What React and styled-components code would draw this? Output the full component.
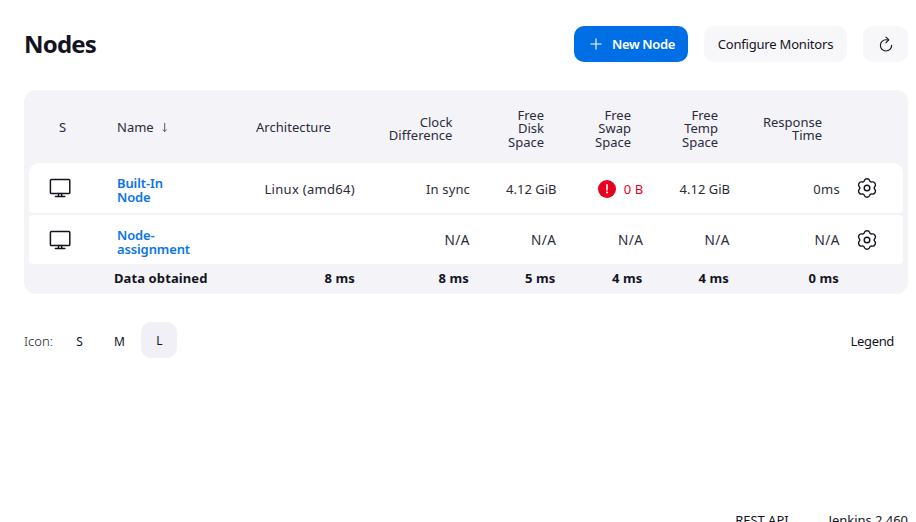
import React from "react";
import styled, { createGlobalStyle } from "styled-components";
import { IoRefreshOutline } from "react-icons/io5";

const GlobalStyle = createGlobalStyle`
  *, *::before, *::after { box-sizing: border-box; }
  html, body { margin: 0; height: 100%; overflow: hidden; background: #fff; }
  body { font: 400 13px/18px "Noto Sans", sans-serif; color: #14141f; }
  svg { display: block; flex: none; }
`;

const Page = styled.main`
  height: 522px;
  padding: 26px 8px 0 24px;
  display: flex;
  flex-direction: column;
  overflow: hidden;
`;

const AppBar = styled.header`
  display: flex;
  align-items: center;
  gap: 16px;
  height: 36px;
  margin-bottom: 28px;
`;

const Title = styled.h1`
  flex: 1;
  margin: 0;
  font-size: 24px;
  line-height: 36px;
  font-weight: 700;
  letter-spacing: -0.8px;
`;

const Button = styled.button`
  display: flex;
  align-items: center;
  justify-content: center;
  width: ${(p) => p.$width}px;
  height: 36px;
  padding: ${(p) => (p.$primary ? "0 0 0 3px" : "0")};
  border: 0;
  border-radius: 10px;
  font: ${(p) => (p.$primary ? 600 : 400)} 13px/18px "Noto Sans", sans-serif;
  letter-spacing: ${(p) => (p.$primary ? -0.35 : -0.2)}px;
  white-space: nowrap;
  color: ${(p) => (p.$primary ? "#fff" : "#14141f")};
  background: ${(p) => (p.$primary ? "#006fe6" : "#f7f7fa")};
  gap: 10px;
`;

const Table = styled.section`
  display: flex;
  flex-direction: column;
  height: 204px;
  padding: 0 5px;
  border-radius: 12px;
  background: #f3f3f8;
`;

const Row = styled.div`
  display: grid;
  grid-template-columns: 88px 90px 148px 115px 86.5px 87px 86.5px 110px 63px;
  align-items: center;
`;

const HeadRow = styled(Row)`
  height: 73px;
  padding-top: 2px;
  line-height: 13.5px;
  color: #2b2b38;
`;

const NodeRow = styled(Row)`
  height: ${(p) => p.$height}px;
  margin-bottom: ${(p) => (p.$first ? 2 : 0)}px;
  border-radius: ${(p) => (p.$first ? "10px 10px 4px 4px" : "4px")};
  background: #fff;
  color: #2b2b38;
`;

const FootRow = styled(Row)`
  height: 27px;
  font-weight: 700;
  letter-spacing: 0.1px;
`;

const Cell = styled.div`
  display: flex;
  align-items: center;
  justify-content: flex-end;
  text-align: right;
  white-space: pre-line;
  gap: 8px;
  padding-right: ${(p) => p.$inset || 0}px;
  padding-top: ${(p) => p.$drop || 0}px;
  font-size: ${(p) => p.$size || 13}px;
  letter-spacing: ${(p) => p.$tracking || 0}px;
  color: ${(p) => (p.$alert ? "#e6001f" : "inherit")};
`;

const StatusCell = styled.div`
  padding-left: ${(p) => p.$start}px;
`;

const NameCell = styled.div`
  display: flex;
  align-items: center;
  gap: 8px;
  white-space: nowrap;
`;

const NodeLink = styled.a`
  white-space: pre-line;
  font-weight: 600;
  letter-spacing: -0.12px;
  line-height: 14px;
  padding-top: ${(p) => p.$drop}px;
  color: #0b74ea;
`;

const FootLabel = styled.div`
  margin-left: -3px;
  white-space: nowrap;
`;

const GearCell = styled.div`
  padding-left: 16px;
  padding-bottom: ${(p) => p.$lift}px;
`;

const IconBar = styled.div`
  display: flex;
  align-items: center;
  height: 36px;
  margin-top: 28px;
`;

const IconLabel = styled.span`
  width: 37px;
  padding-top: 2px;
  font-weight: 300;
`;

const SizeOption = styled.button`
  width: 36px;
  height: 36px;
  margin-right: 4px;
  padding: ${(p) => (p.$active ? 1 : 3)}px 0 0 1px;
  border: 0;
  border-radius: 10px;
  font: 400 12px/18px "Noto Sans", sans-serif;
  color: #14141f;
  background: ${(p) => (p.$active ? "#f1f0f7" : "transparent")};
`;

const Legend = styled.a`
  margin-left: auto;
  padding: 2px 14px 0 0;
  letter-spacing: -0.35px;
`;

const Footer = styled.footer`
  display: flex;
  justify-content: flex-end;
  gap: 40px;
  margin-top: auto;
  height: 11px;
  white-space: nowrap;
  letter-spacing: -0.05px;
`;

const PlusIcon = () => (
  <svg width="12" height="12" viewBox="0 0 12 12" stroke="currentColor" strokeWidth="1.1" strokeLinecap="round">
    <path d="M6 0.8v10.4M0.8 6h10.4" />
  </svg>
);

const SortIcon = () => (
  <svg width="6" height="11" viewBox="0 0 6 11" fill="none" stroke="#555560" strokeWidth="1">
    <path d="M2.7 1v8.6M0.8 7.6l1.9 2 1.9-2" />
  </svg>
);

const ComputerIcon = () => (
  <svg width="22" height="20" viewBox="0 0 22 20" fill="none" stroke="#14141f" strokeWidth="1.5" strokeLinecap="round" strokeLinejoin="round">
    <rect x="1.4" y="1.5" width="19.4" height="14" rx="1.1" />
    <path d="M9.8 15.4l-.5 3M12.4 15.4l.5 3M6.4 18.6h9.4" />
  </svg>
);

const gearLobes = Array.from({ length: 6 }, (_, i) => {
  const a = (i * Math.PI) / 3;
  const at = (x, y) =>
    `${(11 + x * Math.cos(a) - y * Math.sin(a)).toFixed(2)} ${(11 + x * Math.sin(a) + y * Math.cos(a)).toFixed(2)}`;
  const start = i === 0 ? `M${at(-3.6, -6.24)}` : "";
  return `${start}C${at(-1.9, -7.1)} ${at(-3.4, -9.3)} ${at(0, -9.3)}C${at(3.4, -9.3)} ${at(1.9, -7.1)} ${at(3.6, -6.24)}`;
}).join("");

const GearIcon = () => (
  <svg width="22" height="22" viewBox="0 0 22 22" fill="none" stroke="#14141f" strokeWidth="1.4" strokeLinejoin="round">
    <path d={`${gearLobes}Z`} />
    <circle cx="11" cy="11" r="2.8" />
  </svg>
);

const AlertIcon = () => (
  <svg width="18" height="18" viewBox="0 0 18 18">
    <circle cx="9" cy="9" r="9" fill="#e6001f" />
    <path d="M9 4.8v5.1" stroke="#fff" strokeWidth="1.5" strokeLinecap="round" />
    <circle cx="9" cy="12.6" r="1" fill="#fff" />
  </svg>
);

const columns = [
  { label: "Architecture", inset: 24, tracking: 0.05 },
  { label: "Clock\nDifference", inset: 17.5, tracking: 0.05, drop: 3 },
  { label: "Free\nDisk\nSpace", inset: 12.5, drop: 3 },
  { label: "Free\nSwap\nSpace", inset: 12.5, drop: 3 },
  { label: "Free\nTemp\nSpace", inset: 12, drop: 3 },
  { label: "Response\nTime", inset: 18, drop: 3 },
];

const nodes = [
  {
    name: "Built-In\nNode",
    height: 50,
    cells: [
      { text: "Linux (amd64)", tracking: 0.3 },
      { text: "In sync", tracking: 0.15 },
      { text: "4.12 GiB" },
      { text: "0 B", alert: true, tracking: 0.2 },
      { text: "4.12 GiB" },
      { text: "0ms", tracking: 0.3 },
    ],
  },
  {
    name: "Node-\nassignment",
    height: 49,
    cells: [{ text: "" }, ...Array(5).fill({ text: "N/A", tracking: 0.5, size: 13.6 })],
  },
];

const timings = ["8 ms", "8 ms", "5 ms", "4 ms", "4 ms", "0 ms"];

export default function App() {
  return (
    <>
      <GlobalStyle />
      <Page>
        <AppBar>
          <Title>Nodes</Title>
          <Button $primary $width={114}>
            <PlusIcon />
            New Node
          </Button>
          <Button $width={143}>Configure Monitors</Button>
          <Button $width={45} aria-label="Refresh">
            <IoRefreshOutline size={18} />
          </Button>
        </AppBar>

        <Table>
          <HeadRow>
            <StatusCell $start={30}>S</StatusCell>
            <NameCell>
              Name <SortIcon />
            </NameCell>
            {columns.map((c) => (
              <Cell key={c.label} $inset={c.inset} $tracking={c.tracking} $drop={c.drop}>
                {c.label}
              </Cell>
            ))}
          </HeadRow>
          {nodes.map((n, i) => (
            <NodeRow key={n.name} $first={i === 0} $height={n.height}>
              <StatusCell $start={20}>
                <ComputerIcon />
              </StatusCell>
              <NameCell>
                <NodeLink $drop={i === 0 ? 3 : 5}>{n.name}</NodeLink>
              </NameCell>
              {n.cells.map((c, j) => (
                <Cell key={j} $alert={c.alert} $tracking={c.tracking} $size={c.size} $drop={i === 0 ? 2 : 0}>
                  {c.alert && <AlertIcon />}
                  {c.text}
                </Cell>
              ))}
              <GearCell $lift={i === 0 ? 1 : 0}>
                <GearIcon />
              </GearCell>
            </NodeRow>
          ))}
          <FootRow>
            <span />
            <FootLabel>Data obtained</FootLabel>
            {timings.map((t, i) => (
              <Cell key={i} $inset={i ? 1 : 0} $tracking={0.1}>
                {t}
              </Cell>
            ))}
          </FootRow>
        </Table>

        <IconBar>
          <IconLabel>Icon:</IconLabel>
          <SizeOption>S</SizeOption>
          <SizeOption>M</SizeOption>
          <SizeOption $active>L</SizeOption>
          <Legend>Legend</Legend>
        </IconBar>

        <Footer>
          <span>REST API</span>
          <span>Jenkins 2.460</span>
        </Footer>
      </Page>
    </>
  );
}
